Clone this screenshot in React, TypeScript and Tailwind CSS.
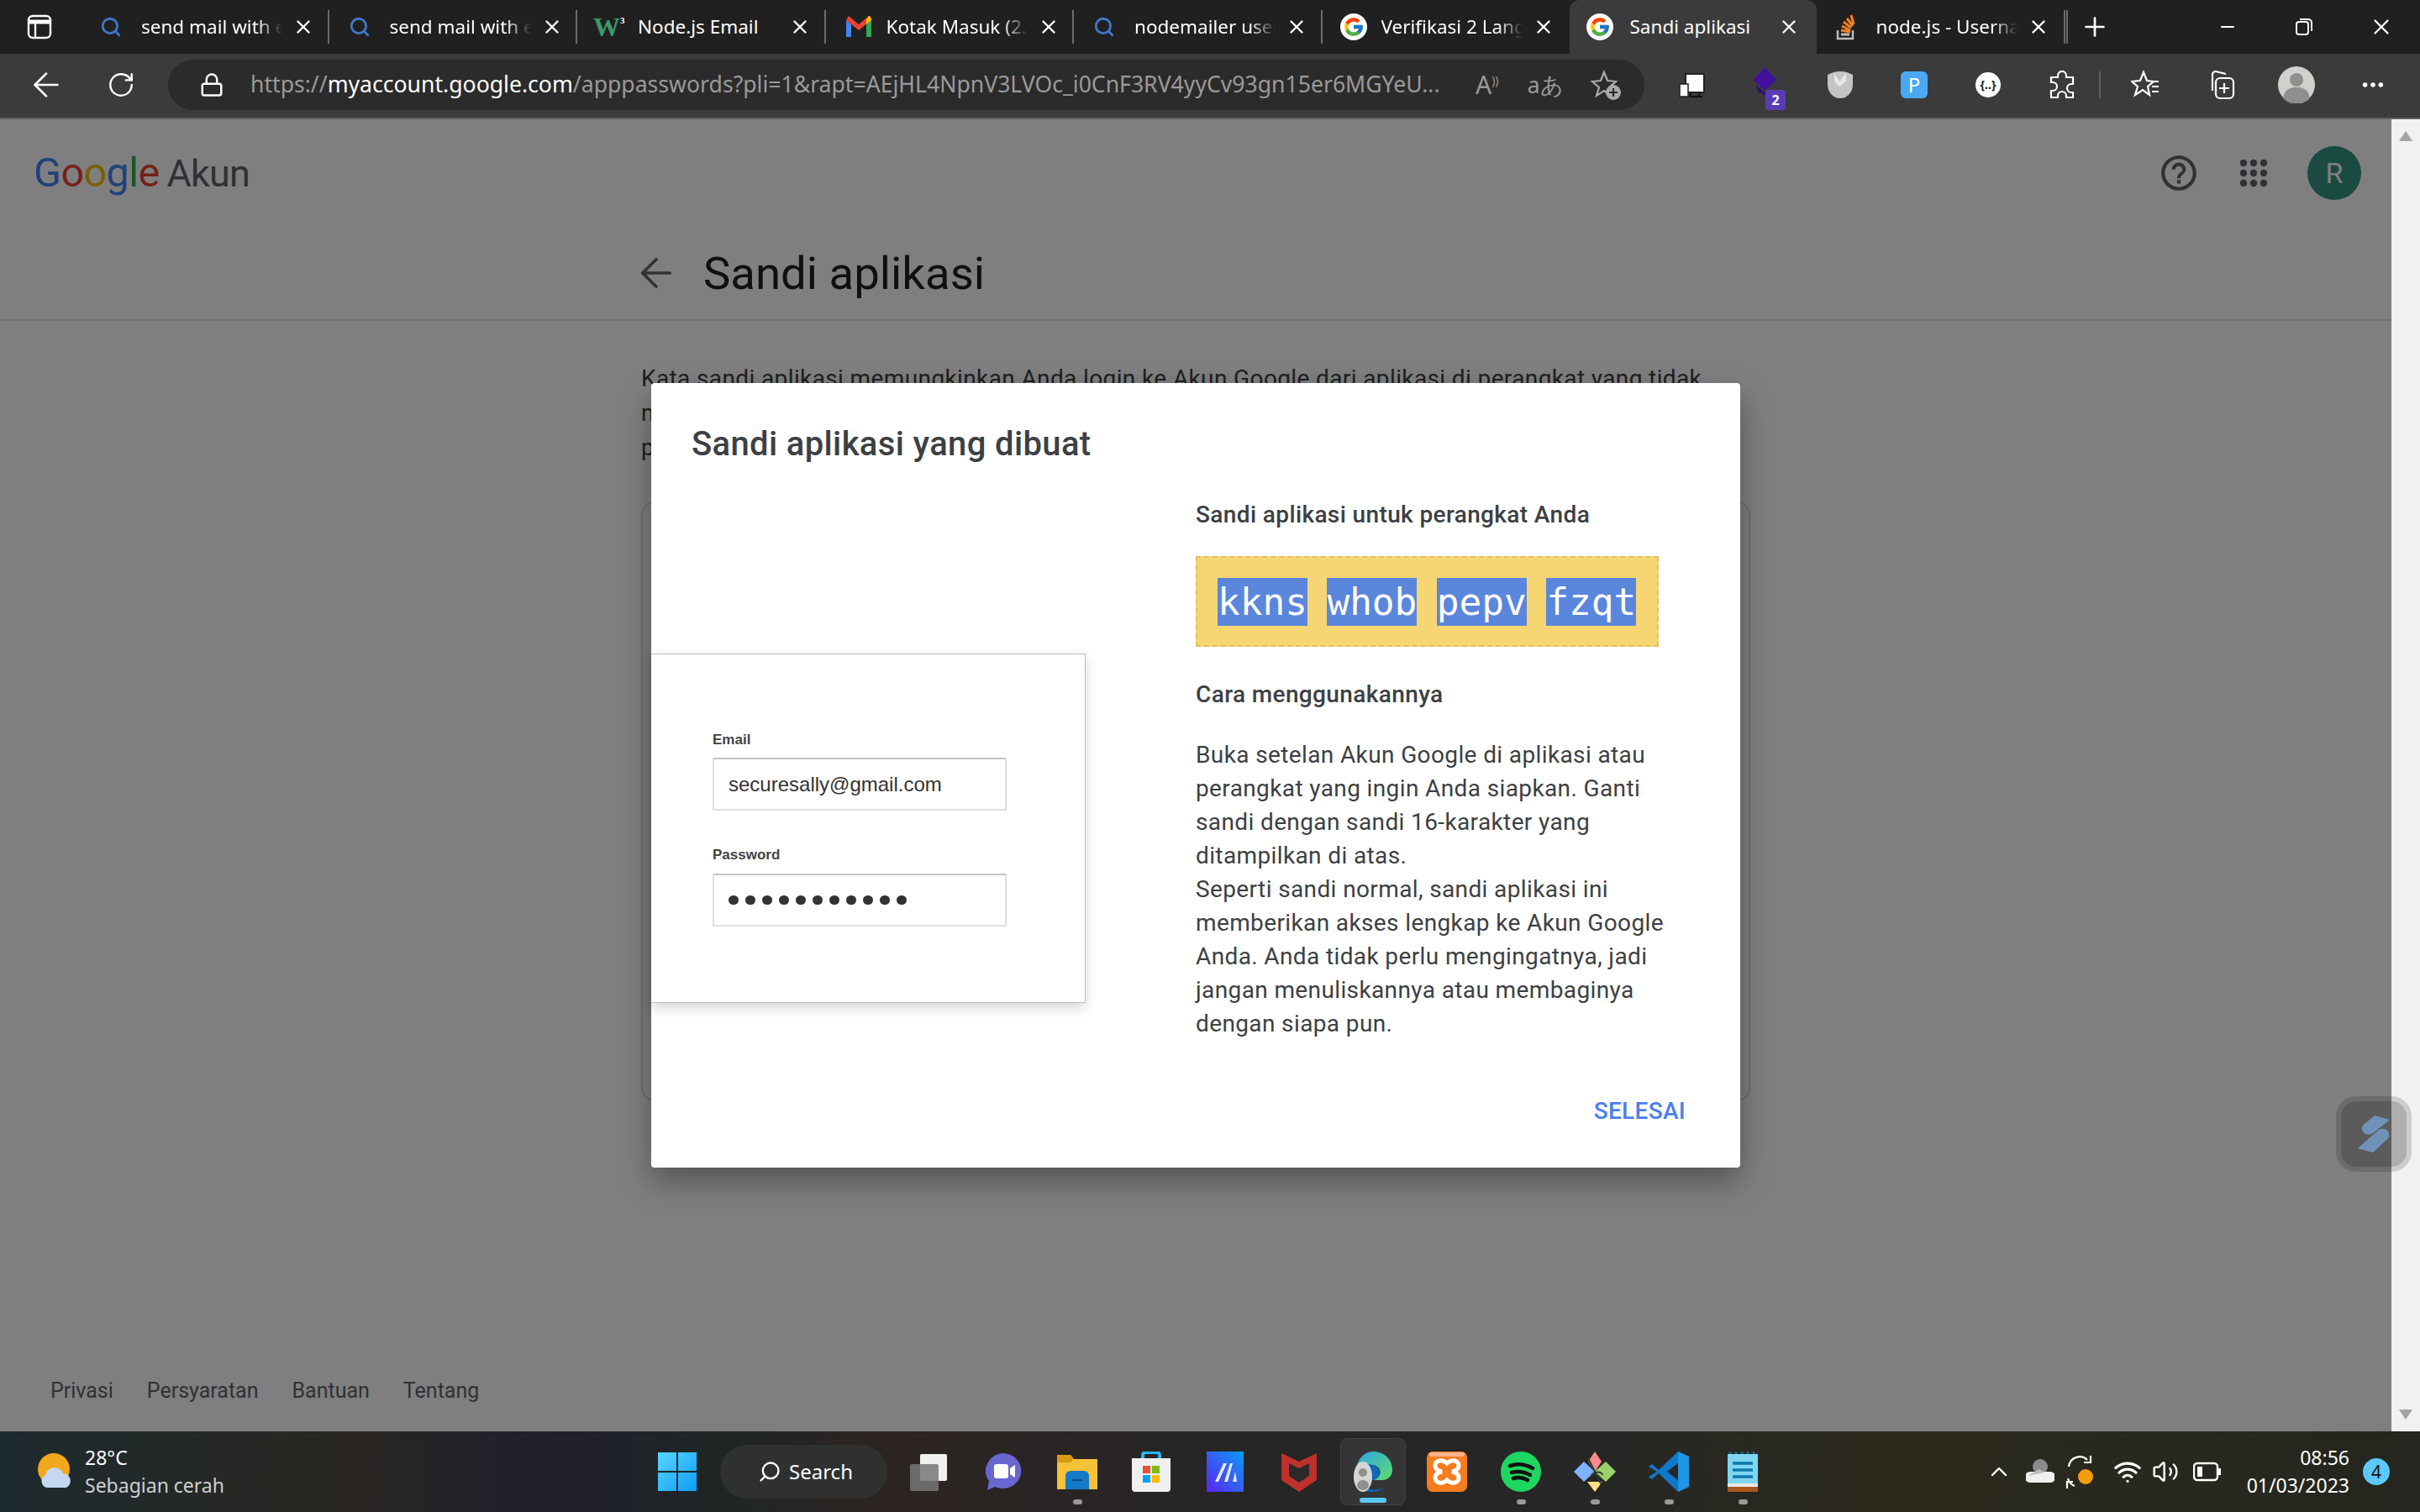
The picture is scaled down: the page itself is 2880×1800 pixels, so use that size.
import { ArrowLeft, ChevronUp, Lock, Minus, MoreHorizontal, Plus, RotateCw, Search, Volume2, Wifi, X } from "lucide-react";
import { FcGoogle } from "react-icons/fc";
import { MdHelpOutline } from "react-icons/md";
import type { ReactNode } from "react";

function SearchFav() {
  return <Search size={26} strokeWidth={2.6} className="text-[#3f78c9]" />;
}

function GoogleFav() {
  return (
    <span className="flex h-[32px] w-[32px] items-center justify-center rounded-full bg-white">
      <FcGoogle size={26} />
    </span>
  );
}

function W3Fav() {
  return (
    <span className="-ml-[4px] flex w-[36px] items-start font-['Liberation_Serif',serif] text-[32px] font-bold leading-[30px] text-[#3f9a6a]">
      W<span className="text-[11px] leading-[14px] text-white">3</span>
    </span>
  );
}

function GmailFav() {
  return (
    <svg width="32" height="28" viewBox="0 0 32 28">
      <path d="M1 6v20h6V11z" fill="#4285f4" />
      <path d="M31 6v20h-6V11z" fill="#34a853" />
      <path d="M1 6l15 12L31 6l-3-5-12 10L4 1z" fill="#ea4335" />
      <path d="M25 5l3-4c2 0 3 2 3 5l-6 5z" fill="#fbbc04" />
    </svg>
  );
}

function StackFav() {
  return (
    <svg width="26" height="32" viewBox="0 0 26 32">
      <path d="M3 20v10h18V20" fill="none" stroke="#bcbbbb" strokeWidth="2.5" />
      <path d="M7 25h10" stroke="#bcbbbb" strokeWidth="3" />
      <path d="M7 20l11 2M8 15l10 5M10 10l9 7M14 6l7 9M19 2l3 11" stroke="#f48024" strokeWidth="3" fill="none" />
    </svg>
  );
}

const TABS: { title: string; icon: ReactNode; active?: boolean; fade?: boolean }[] = [
  { title: "send mail with express", icon: <SearchFav />, fade: true },
  { title: "send mail with express", icon: <SearchFav />, fade: true },
  { title: "Node.js Email", icon: <W3Fav /> },
  { title: "Kotak Masuk (2.345)", icon: <GmailFav />, fade: true },
  { title: "nodemailer user", icon: <SearchFav />, fade: true },
  { title: "Verifikasi 2 Langkah", icon: <GoogleFav />, fade: true },
  { title: "Sandi aplikasi", icon: <GoogleFav />, active: true },
  { title: "node.js - Username", icon: <StackFav />, fade: true },
];

function TabBar() {
  return (
    <div className="flex h-[64px] items-stretch bg-[#202020] text-white">
      <div className="flex w-[95px] items-center justify-center pr-[2px]">
        <svg width="30" height="30" viewBox="0 0 30 30" fill="none" stroke="white" strokeWidth="2.4">
          <rect x="2" y="2" width="26" height="26" rx="5" />
          <path d="M2 9h26" strokeWidth="5" />
          <path d="M10 9v19" />
        </svg>
      </div>
      {TABS.map((t, i) => (
        <div
          key={i}
          className={
            t.active
              ? "flex w-[294px] items-center rounded-t-[12px] bg-[#3b3b3b] pl-[20px]"
              : i === 5 || i === 7
                ? "flex w-[295px] items-center pl-[22px]"
                : "flex w-[295.5px] items-center border-l-2 border-transparent pl-[22px]"
          }
        >
          <span className={t.active ? "flex w-[52px] shrink-0 items-center" : "flex w-[49px] shrink-0 items-center"}>{t.icon}</span>
          <span
            className={
              t.fade
                ? "w-[168px] overflow-hidden whitespace-nowrap text-[22.5px] [mask-image:linear-gradient(to_right,black_82%,transparent)]"
                : t.active
                  ? "w-[164px] overflow-hidden whitespace-nowrap text-[22.5px]"
                  : "w-[168px] overflow-hidden whitespace-nowrap text-[22.5px]"
            }
          >
            {t.title}
          </span>
          <X size={26} strokeWidth={2.2} className="ml-[12px] shrink-0" />
          {!t.active && i !== 5 && <span className="ml-auto mr-[-1px] h-[40px] w-[2px] bg-[#6b6b6b]" />}
        </div>
      ))}
      <div className="flex flex-1 items-center border-l-2 border-transparent">
        <span className="h-[40px] w-[2px] bg-[#6b6b6b]" />
        <Plus size={36} strokeWidth={1.8} className="ml-[14px]" />
        <Minus size={24} strokeWidth={2} className="ml-[128px]" />
        <svg width="24" height="24" viewBox="0 0 24 24" fill="none" stroke="white" strokeWidth="2" className="ml-[67px]">
          <rect x="3" y="6" width="14" height="15" rx="3" />
          <path d="M7 3h10a4 4 0 0 1 4 4v10" />
        </svg>
        <X size={30} strokeWidth={1.8} className="ml-[65px]" />
      </div>
    </div>
  );
}

function ExtSlot({ children }: { children: ReactNode }) {
  return <div className="flex w-[88px] shrink-0 items-center justify-center">{children}</div>;
}

function Toolbar() {
  return (
    <div className="flex h-[78px] items-center border-b-2 border-[#5f5f5f] bg-[#3b3b3b] pb-[2px] text-white">
      <div className="flex w-[100px] justify-center pl-[10px]">
        <ArrowLeft size={46} strokeWidth={1.4} />
      </div>
      <div className="flex w-[88px] justify-center">
        <RotateCw size={34} strokeWidth={1.7} />
      </div>
      <div className="ml-[12px] flex h-[60px] w-[1757px] items-center rounded-full bg-[#2b2b2b] pl-[37px] text-[#9a9a9a]">
        <Lock size={30} strokeWidth={2} className="text-white" />
        <span className="ml-[31px] w-[1424px] overflow-hidden whitespace-nowrap text-[26.6px]">
          https://<span className="text-white">myaccount.google.com</span>
          /apppasswords?pli=1&amp;rapt=AEjHL4NpnV3LVOc_i0CnF3RV4yyCv93gn15er6MGYeU...
        </span>
        <span className="ml-[34px] text-[30px] leading-none">
          A<span className="align-super text-[14px]">))</span>
        </span>
        <span className="ml-[34px] text-[27px]">aあ</span>
        <svg width="38" height="38" viewBox="0 0 38 38" fill="none" stroke="#aaaaaa" strokeWidth="2.2" className="ml-[31px]">
          <path d="M17 4l4 10 10 1-8 7 3 10-9-6-9 6 3-10-8-7 10-1z" />
          <circle cx="28" cy="28" r="9" fill="#aaaaaa" stroke="none" />
          <path d="M28 23v10M23 28h10" stroke="#2b2b2b" />
        </svg>
      </div>
      <div className="ml-[13px] flex items-center">
        <ExtSlot>
          <svg width="32" height="32" viewBox="0 0 32 32">
            <rect x="8" y="3" width="22" height="22" fill="white" stroke="#222" strokeWidth="2" />
            <rect x="1" y="15" width="10" height="15" fill="white" stroke="#222" strokeWidth="1.5" />
            <path d="M14 25v5M24 25v5M12 30h16" stroke="#111" strokeWidth="2" />
          </svg>
        </ExtSlot>
        <ExtSlot>
          <div className="relative h-[44px] w-[36px]">
            <svg width="36" height="36" viewBox="0 0 36 36">
              <path d="M16 1l14 15-14 13L3 16z" fill="#3f119e" />
              <path d="M5 22l12 10 5 5-13-6z" fill="#2b0f70" />
            </svg>
            <span className="absolute right-[-5px] bottom-[-8px] flex h-[24px] w-[24px] items-center justify-center rounded-[3px] bg-[#5b3bb5] text-[16px] font-bold leading-none">
              2
            </span>
          </div>
        </ExtSlot>
        <ExtSlot>
          <svg width="34" height="34" viewBox="0 0 34 34">
            <path d="M2 5c5-2 8-4 15-4s10 2 15 4v12c0 8-6 16-15 16S2 25 2 17z" fill="#c4c4c4" />
            <path d="M10 3l6 10 8-10v10l-8 6-6-6z" fill="#e7e7e7" />
          </svg>
        </ExtSlot>
        <ExtSlot>
          <span className="flex h-[32px] w-[32px] items-center justify-center rounded-[6px] bg-[#4aa8f5] text-[24px] leading-none">P</span>
        </ExtSlot>
        <ExtSlot>
          <span className="flex h-[30px] w-[30px] items-center justify-center rounded-full bg-white text-[14px] font-bold leading-none text-[#222]">
            {"{..}"}
          </span>
        </ExtSlot>
        <ExtSlot>
          <svg width="34" height="34" viewBox="0 0 34 34" fill="none" stroke="white" strokeWidth="2.2">
            <path d="M12 6a5 5 0 0 1 10 0v2h8v8h-2a5 5 0 0 0 0 10h2v6H22v-2a5 5 0 0 0-10 0v2H4V24h2a5 5 0 0 0 0-10H4V8h8z" />
          </svg>
        </ExtSlot>
        <span className="h-[32px] w-[2px] bg-[#5f5f5f]" />
        <div className="ml-[10px] flex w-[88px] justify-center">
          <svg width="36" height="36" viewBox="0 0 36 36" fill="none" stroke="white" strokeWidth="2.2">
            <path d="M15 3l4 10 8 1-7 6 2 10-8-6-9 6 3-10-7-6 10-1z" />
            <path d="M25 20h8M25 26h8M27 14h6" />
          </svg>
        </div>
        <div className="flex w-[92px] justify-center">
          <svg width="38" height="38" viewBox="0 0 38 38" fill="none" stroke="white" strokeWidth="2.2">
            <path d="M8 26V8a4 4 0 0 1 4-5l12 3" />
            <rect x="12" y="11" width="21" height="24" rx="5" />
            <path d="M22 17v12M16 23h12" />
          </svg>
        </div>
        <div className="flex w-[86px] justify-center">
          <svg width="44" height="44" viewBox="0 0 44 44">
            <circle cx="22" cy="22" r="22" fill="#d1d0cc" />
            <circle cx="22" cy="16" r="8" fill="#8f8f8f" />
            <path d="M6 38c2-11 8-13 16-13s14 2 16 13a22 22 0 0 1-32 0z" fill="#8f8f8f" />
          </svg>
        </div>
        <div className="flex w-[96px] justify-center">
          <MoreHorizontal size={32} strokeWidth={2.2} />
        </div>
      </div>
    </div>
  );
}

function GoogleAkun() {
  return (
    <div className="flex items-center font-['Roboto',sans-serif] leading-none">
      <span className="text-[48.5px] tracking-[-0.6px]">
        <span className="text-[#4285f4]">G</span>
        <span className="text-[#ea4335]">o</span>
        <span className="text-[#fbbc05]">o</span>
        <span className="text-[#4285f4]">g</span>
        <span className="text-[#34a853]">l</span>
        <span className="text-[#ea4335]">e</span>
      </span>
      <span className="ml-[9px] text-[45px] tracking-[-0.8px] text-[#5f6368]">Akun</span>
    </div>
  );
}

function BackgroundPage() {
  return (
    <div className="relative flex min-w-0 flex-1 flex-col bg-white font-['Roboto',sans-serif]">
      <div className="flex h-[128px] items-center pl-[40px]">
        <GoogleAkun />
        <MdHelpOutline size={50} className="ml-auto text-[#5f6368]" />
        <svg width="34" height="34" viewBox="0 0 34 34" fill="#5f6368" className="ml-[47px]">
          {[5, 17, 29].map((y) => [5, 17, 29].map((x) => <circle key={`${x}-${y}`} cx={x} cy={y} r="4.2" />))}
        </svg>
        <span className="ml-[47px] mr-[36px] flex h-[64px] w-[64px] items-center justify-center rounded-full bg-[#349480] text-[34px] text-white">
          R
        </span>
      </div>
      <div className="flex h-[112px] items-center border-b-2 border-[#e0e0e0] pl-[753px]">
        <ArrowLeft size={56} strokeWidth={1.5} className="text-[#5f6368]" />
        <h1 className="ml-[28px] text-[54.5px] leading-none text-[#202124]">Sandi aplikasi</h1>
      </div>
      <div className="ml-[763px] w-[1320px] pt-[48px]">
        <p className="text-[28px] leading-[41px] tracking-[0.38px] text-[#3c4043]">
          Kata sandi aplikasi memungkinkan Anda login ke Akun Google dari aplikasi di perangkat yang tidak
          <br />
          mendukung Verifikasi 2 Langkah. Anda hanya perlu memasukkannya sekali sehingga tidak
          <br />
          perlu mengingatnya.
        </p>
        <div className="mt-[44px] h-[714px] rounded-[16px] border-2 border-[#dadce0]" />
      </div>
      <div className="mt-auto flex gap-[40px] pb-[28px] pl-[60px] text-[25px] leading-[40px] text-[#5f6368]">
        <span>Privasi</span>
        <span>Persyaratan</span>
        <span>Bantuan</span>
        <span>Tentang</span>
      </div>
      <div className="absolute inset-0 bg-black/50" />
    </div>
  );
}

function LoginIllustration() {
  return (
    <div className="mt-[225px] h-[416px] w-[517px] border border-l-0 border-[#bdbdbd] bg-white pl-[73px] pt-[90px] font-['Liberation_Sans',sans-serif] text-[#333333] shadow-[0_6px_14px_rgba(0,0,0,0.16)]">
      <div className="text-[17px] font-bold leading-[24px] text-[#444444]">Email</div>
      <div className="mt-[9px] flex h-[63px] w-[350px] items-center border-2 border-[#dedede] border-t-[#c4c4c4] pl-[17px] text-[24px]">
        securesally@gmail.com
      </div>
      <div className="mt-[41px] text-[17px] font-bold leading-[24px] text-[#444444]">Password</div>
      <div className="mt-[10px] flex h-[63px] w-[350px] items-center gap-[8.5px] border-2 border-[#dedede] border-t-[#c4c4c4] pl-[17px]">
        {Array.from({ length: 11 }).map((_, i) => (
          <span key={i} className="h-[11.5px] w-[11.5px] rounded-full bg-[#333333]" />
        ))}
      </div>
    </div>
  );
}

function AppPasswordDialog() {
  return (
    <div className="absolute left-[775px] top-[314px] flex w-[1296px] flex-col rounded-[4px] bg-white font-['Roboto',sans-serif] text-[#3c4043] shadow-[0_16px_36px_rgba(0,0,0,0.35)]">
      <h2 className="mt-[49px] pl-[48px] text-[40px] font-medium leading-[48px] tracking-[0.35px]">Sandi aplikasi yang dibuat</h2>
      <div className="flex">
        <div className="w-[648px]">
          <LoginIllustration />
        </div>
        <div className="w-[600px] pt-[40px] tracking-[0.38px]">
          <div className="text-[28px] font-medium leading-[40px]">Sandi aplikasi untuk perangkat Anda</div>
          <div className="mt-[29px] flex h-[108px] w-[551px] items-center gap-[23.5px] border-2 border-dashed border-[#dfc35e] bg-[#f6d673] pl-[24px] font-['DejaVu_Sans_Mono',monospace] text-[44.4px] leading-[56px] tracking-normal text-white">
            {["kkns", "whob", "pepv", "fzqt"].map((w) => (
              <span key={w} className="bg-[#5a86dc] pt-[1px]">
                {w}
              </span>
            ))}
          </div>
          <div className="mt-[37px] text-[28px] font-medium leading-[40px]">Cara menggunakannya</div>
          <p className="mt-[32px] text-[28px] leading-[40px]">
            Buka setelan Akun Google di aplikasi atau
            <br />
            perangkat yang ingin Anda siapkan. Ganti
            <br />
            sandi dengan sandi 16-karakter yang
            <br />
            ditampilkan di atas.
            <br />
            Seperti sandi normal, sandi aplikasi ini
            <br />
            memberikan akses lengkap ke Akun Google
            <br />
            Anda. Anda tidak perlu mengingatnya, jadi
            <br />
            jangan menuliskannya atau membaginya
            <br />
            dengan siapa pun.
          </p>
        </div>
      </div>
      <div className="mb-[47px] mt-[64px] flex justify-end pr-[65px] text-[28px] font-medium leading-[40px] tracking-[0.3px] text-[#4a7fee]">SELESAI</div>
    </div>
  );
}

function FloatingWidget() {
  return (
    <div className="absolute right-[10px] top-[1163px] flex h-[90px] w-[90px] items-center justify-center rounded-[24px] bg-black/15">
      <div className="flex h-[78px] w-[78px] items-center justify-center rounded-[18px] bg-black/15">
        <svg width="40" height="50" viewBox="0 0 40 50" fill="#6f93b8">
          <path d="M21 3l18 5-20 16c-5 3-12 2-13-5 0-3 1-5 3-6z" />
          <path d="M26 20c6-3 13 0 12 8-1 2-2 4-4 5L19 47 1 42z" />
        </svg>
      </div>
    </div>
  );
}

function Scrollbar() {
  return (
    <div className="flex w-[34px] shrink-0 flex-col items-center justify-between bg-[#f1f1f1] py-[14px]">
      <span className="h-0 w-0 border-x-[8px] border-b-[12px] border-x-transparent border-b-[#a3a3a3]" />
      <span className="h-0 w-0 border-x-[8px] border-t-[12px] border-x-transparent border-t-[#a3a3a3]" />
    </div>
  );
}

function Pin({ dot, active, children }: { dot?: boolean; active?: boolean; children: ReactNode }) {
  return (
    <div className={active ? "relative mx-[5px] flex h-[80px] w-[78px] items-center justify-center rounded-[8px] border border-[#404040] bg-[#353535]" : "relative flex h-[80px] w-[88px] items-center justify-center"}>
      {children}
      {dot && <span className="absolute bottom-[1px] h-[6px] w-[11px] rounded-full bg-[#9a9a9a]" />}
      {active && <span className="absolute bottom-[2px] h-[6px] w-[32px] rounded-full bg-[#5cc8fa]" />}
    </div>
  );
}

function Taskbar() {
  return (
    <div className="flex h-[96px] items-center bg-[linear-gradient(90deg,#1d2a2e_0%,#2a2722_14%,#211f2c_22%,#1f2625_30%,#2c2422_36%,#252626_55%,#262626_65%,#2c2a1c_78%,#24261f_100%)] text-white">
      <div className="flex w-[783px] shrink-0 items-center pl-[44px]">
        <svg width="46" height="46" viewBox="0 0 46 46">
          <circle cx="20" cy="20" r="19" fill="#f2a81d" />
          <path d="M12 42a8 8 0 0 1-2-15 11 11 0 0 1 21-2 9 9 0 0 1 4 17z" fill="#c5d8f3" />
        </svg>
        <div className="ml-[11px] text-[23px] leading-[33px]">
          <div>28°C</div>
          <div className="text-[#cfcfcf]">Sebagian cerah</div>
        </div>
      </div>
      <svg width="46" height="46" viewBox="0 0 46 46" className="shrink-0">
        <defs>
          <linearGradient id="win" x1="0" y1="0" x2="1" y2="1">
            <stop offset="0" stopColor="#58d6ff" />
            <stop offset="1" stopColor="#0f9cf5" />
          </linearGradient>
        </defs>
        <path d="M0 0h22v22H0zM24 0h22v22H24zM0 24h22v22H0zM24 24h22v22H24z" fill="url(#win)" />
      </svg>
      <div className="ml-[28px] flex h-[64px] w-[199px] shrink-0 items-center rounded-full bg-[#2f3030] pl-[45px] text-[24px]">
        <Search size={28} strokeWidth={2} className="-scale-x-100" />
        <span className="ml-[9px]">Search</span>
      </div>
      <div className="ml-[6px] flex shrink-0 items-center">
        <Pin>
          <svg width="46" height="46" viewBox="0 0 46 46">
            <rect x="12" y="2" width="32" height="32" rx="2" fill="#f0f0f0" />
            <rect x="0" y="14" width="34" height="32" rx="2" fill="#777777" fillOpacity="0.85" />
          </svg>
        </Pin>
        <Pin>
          <svg width="46" height="46" viewBox="0 0 46 46">
            <path d="M23 1a22 21 0 1 1-10 40l-9 4 2-11A22 21 0 0 1 23 1z" fill="#6a66d0" />
            <rect x="12" y="14" width="17" height="17" rx="3" fill="white" />
            <path d="M31 19l6-4v15l-6-4z" fill="white" />
          </svg>
        </Pin>
        <Pin dot>
          <svg width="48" height="46" viewBox="0 0 48 46">
            <path d="M0 3h16l4 5h28v36H0z" fill="#f5c137" />
            <path d="M0 3h16l4 5-4 4H0z" fill="#d79a10" />
            <path d="M10 28a6 6 0 0 1 6-6h16a6 6 0 0 1 6 6v16H10z" fill="#1479c9" />
            <path d="M18 32h12v2H18z" fill="#0a4c85" />
          </svg>
        </Pin>
        <Pin>
          <svg width="46" height="48" viewBox="0 0 46 48">
            <path d="M13 8V4a3 3 0 0 1 3-3h14a3 3 0 0 1 3 3v4" fill="none" stroke="#28b5f0" strokeWidth="4" />
            <path d="M0 8h46v36a4 4 0 0 1-4 4H4a4 4 0 0 1-4-4z" fill="#f0f0f0" />
            <rect x="13" y="17" width="9" height="9" fill="#e8532b" />
            <rect x="24" y="17" width="9" height="9" fill="#7fba00" />
            <rect x="13" y="28" width="9" height="9" fill="#00a4ef" />
            <rect x="24" y="28" width="9" height="9" fill="#ffb900" />
          </svg>
        </Pin>
        <Pin>
          <svg width="44" height="48" viewBox="0 0 44 48">
            <defs>
              <linearGradient id="vp" x1="0" y1="1" x2="1" y2="0">
                <stop offset="0" stopColor="#5c24f2" />
                <stop offset="1" stopColor="#0a9bf5" />
              </linearGradient>
            </defs>
            <rect width="44" height="48" fill="url(#vp)" />
            <path d="M10 36L20 14h4L14 36zM21 36l7-22h3l-6 22zM31 36l3-12 2 12z" fill="#e7e7ff" />
          </svg>
        </Pin>
        <Pin>
          <svg width="42" height="48" viewBox="0 0 42 48">
            <path d="M0 2l21 10L42 2v32L21 48 0 34z" fill="#c0302c" />
            <path d="M9 14l12 6 12-6v15L21 37 9 29z" fill="#2a2a2a" />
          </svg>
        </Pin>
        <Pin active>
          <div className="relative h-[48px] w-[46px]">
            <svg width="46" height="48" viewBox="0 0 46 48">
              <defs>
                <linearGradient id="edge" x1="0" y1="0" x2="1" y2="1">
                  <stop offset="0" stopColor="#2aa4e6" />
                  <stop offset="1" stopColor="#5fdc6f" />
                </linearGradient>
              </defs>
              <path d="M23 0c14 0 23 10 23 22 0 8-6 12-12 12H22c8-2 12-8 8-14S12 14 3 22C4 10 12 0 23 0z" fill="url(#edge)" />
              <path d="M3 22c6-8 19-9 25-3 3 3 3 9 0 13-4 3-10 3-14-1S12 36 16 42 34 46 38 41c-5 7-13 7-18 7C8 48 0 36 3 22z" fill="#0f67bf" />
            </svg>
            <svg width="22" height="36" viewBox="0 0 22 36" className="absolute left-0 bottom-0">
              <ellipse cx="11" cy="18" rx="11" ry="18" fill="#d6d6d2" />
              <circle cx="11" cy="13" r="5" fill="#8f8f8f" />
              <ellipse cx="11" cy="28" rx="7" ry="6" fill="#8f8f8f" />
            </svg>
          </div>
        </Pin>
        <Pin>
          <svg width="48" height="48" viewBox="0 0 48 48" fill="none">
            <rect width="48" height="48" rx="7" fill="#f57c1f" />
            <rect x="3" y="1" width="42" height="5" rx="2" fill="#f8b487" />
            <path d="M24 14c-6-6-14-3-14 3 0 4 3 6 8 7-5 1-8 3-8 7 0 6 8 9 14 3 6 6 14 3 14-3 0-4-3-6-8-7 5-1 8-3 8-7 0-6-8-9-14-3z" stroke="white" strokeWidth="5" />
          </svg>
        </Pin>
        <Pin dot>
          <svg width="48" height="48" viewBox="0 0 48 48" fill="none">
            <circle cx="24" cy="24" r="24" fill="#1ed760" />
            <path d="M11 17c9-3 18-2 27 3M13 25c8-2 15-1 22 3M15 32c6-2 12-1 17 2" stroke="#111" strokeWidth="4.5" strokeLinecap="round" />
          </svg>
        </Pin>
        <Pin dot>
          <svg width="50" height="48" viewBox="0 0 50 48">
            <path d="M25 0l8 12-8 12-8-12z" fill="#ff8a8a" />
            <path d="M0 24l12-12 13 12-13 12z" fill="#7db2ff" />
            <path d="M50 24L38 12 25 24l13 12z" fill="#9bd36a" />
            <path d="M25 48l-9-12h18z" fill="#ffdf80" />
            <path d="M17 8l16 32M20 30c4-8 14-6 14-2" stroke="#333" strokeWidth="2" fill="none" />
          </svg>
        </Pin>
        <Pin dot>
          <svg width="48" height="48" viewBox="0 0 48 48">
            <path d="M35 0l13 6v36l-13 6L12 26 4 33l-4-3 10-6L0 18l4-3 8 7z" fill="#0f78c8" />
            <path d="M35 0l13 6v36l-13 6z" fill="#2196e6" />
            <path d="M35 14L22 24l13 10z" fill="#262626" />
          </svg>
        </Pin>
        <Pin dot>
          <svg width="36" height="48" viewBox="0 0 36 48">
            <path d="M3 0v6M10 0v6M17 0v6M24 0v6M31 0v6" stroke="#0f6f98" strokeWidth="2.5" />
            <rect y="3" width="36" height="36" fill="#7fd6f2" />
            <path d="M6 14h24M6 22h24M6 30h24" stroke="#0f79a8" strokeWidth="3.5" />
            <rect y="38" width="36" height="4" fill="#e8e8e8" />
            <rect y="42" width="36" height="6" fill="#a85a1c" />
          </svg>
        </Pin>
      </div>
      <div className="ml-[245px] flex shrink-0 items-center">
        <ChevronUp size={32} strokeWidth={1.8} />
        <svg width="34" height="34" viewBox="0 0 34 34" className="ml-[16px]">
          <circle cx="17" cy="11" r="9" fill="#8a8a8a" />
          <path d="M5 30a6 6 0 0 1 0-13h24a6 6 0 0 1 0 13z" fill="#f0f0f0" />
          <path d="M2 22l14-8 6 4z" fill="#bdbdbd" />
        </svg>
        <svg width="34" height="44" viewBox="0 0 34 44" fill="none" className="ml-[13px]">
          <path d="M4 16A13 13 0 0 1 26 8M30 3v8h-8M3 30a13 13 0 0 0 8 9M2 42v-8h7" stroke="white" strokeWidth="2.2" />
          <circle cx="24" cy="28" r="9" fill="#f59d0e" />
        </svg>
        <Wifi size={34} strokeWidth={2.2} className="ml-[23px]" />
        <Volume2 size={32} strokeWidth={1.8} className="ml-[12px]" />
        <svg width="34" height="24" viewBox="0 0 34 24" fill="none" className="ml-[17px]">
          <rect x="1" y="2" width="28" height="20" rx="4" stroke="white" strokeWidth="2.4" />
          <rect x="5" y="6" width="6" height="12" fill="white" />
          <rect x="30" y="8" width="3" height="8" fill="white" />
        </svg>
        <div className="ml-[14px] w-[138px] text-right text-[23px] leading-[33px]">
          <div>08:56</div>
          <div>01/03/2023</div>
        </div>
        <span className="ml-[16px] flex h-[32px] w-[32px] items-center justify-center rounded-full bg-[#5cc8fa] text-[21px] leading-none text-[#111111]">4</span>
      </div>
    </div>
  );
}

export default function App() {
  return (
    <div className="flex h-[1800px] w-[2880px] flex-col overflow-hidden font-['Noto_Sans',sans-serif]">
      <TabBar />
      <Toolbar />
      <div className="relative flex min-h-0 flex-1">
        <BackgroundPage />
        <Scrollbar />
        <AppPasswordDialog />
        <FloatingWidget />
      </div>
      <Taskbar />
    </div>
  );
}
